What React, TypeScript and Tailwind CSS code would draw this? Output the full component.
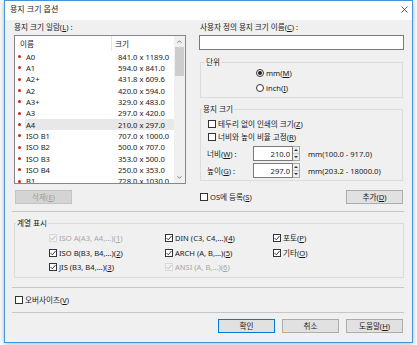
import React from "react";

const SIZES = [
  { name: "A0", size: "841.0 x 1189.0" },
  { name: "A1", size: "594.0 x 841.0" },
  { name: "A2+", size: "431.8 x 609.6" },
  { name: "A2", size: "420.0 x 594.0" },
  { name: "A3+", size: "329.0 x 483.0" },
  { name: "A3", size: "297.0 x 420.0" },
  { name: "A4", size: "210.0 x 297.0", selected: true },
  { name: "ISO B1", size: "707.0 x 1000.0" },
  { name: "ISO B2", size: "500.0 x 707.0" },
  { name: "ISO B3", size: "353.0 x 500.0" },
  { name: "ISO B4", size: "250.0 x 353.0" },
  { name: "B1", size: "728.0 x 1030.0" },
];

function Box({ checked = false, disabled = false }: { checked?: boolean; disabled?: boolean }) {
  return (
    <span
      className={
        disabled
          ? "flex h-[8px] w-[8px] shrink-0 items-center justify-center border border-[#dadada] bg-[#f3f3f3]"
          : "flex h-[8px] w-[8px] shrink-0 items-center justify-center border border-[#333333] bg-white"
      }
    >
      {checked && (
        <svg viewBox="0 0 6 6" className="h-[6px] w-[6px]">
          <path d="M0.5 3 L2.3 4.8 L5.5 1" fill="none" stroke={disabled ? "#b3b3b3" : "#222"} strokeWidth="0.9" />
        </svg>
      )}
    </span>
  );
}

function Radio({ on = false }: { on?: boolean }) {
  return (
    <span className="flex h-[8px] w-[8px] shrink-0 items-center justify-center rounded-full border border-[#333333] bg-white">
      {on && <span className="h-[4px] w-[4px] rounded-full bg-[#222]" />}
    </span>
  );
}

function CheckRow({
  children,
  checked = false,
  disabled = false,
}: {
  children: React.ReactNode;
  checked?: boolean;
  disabled?: boolean;
}) {
  return (
    <div className={disabled ? "flex h-[12px] items-center gap-[2px] text-[#a6a6a6]" : "flex h-[12px] items-center gap-[2px]"}>
      <Box checked={checked} disabled={disabled} />
      <span>{children}</span>
    </div>
  );
}

function Spin({ value }: { value: string }) {
  return (
    <div className="flex h-[15px]">
      <div className="flex w-[40px] items-center justify-end border border-[#7a7a7a] bg-white pr-[2px]">{value}</div>
      <div className="flex w-[7px] flex-col border-y border-r border-[#a8a8a8] bg-[#efefef]">
        <div className="flex flex-1 items-center justify-center border-b border-[#c8c8c8]">
          <svg viewBox="0 0 4 2" className="h-[2px] w-[4px]"><path d="M0 2 L2 0 L4 2 Z" fill="#333" /></svg>
        </div>
        <div className="flex flex-1 items-center justify-center">
          <svg viewBox="0 0 4 2" className="h-[2px] w-[4px]"><path d="M0 0 L2 2 L4 0 Z" fill="#333" /></svg>
        </div>
      </div>
    </div>
  );
}

const btn = "flex h-[14px] w-[57px] items-center justify-center border border-[#adadad] bg-[#e1e1e1]";

export default function App() {
  return (
    <div className="h-[345px] w-[417px] bg-white font-['Noto_Sans','Noto_Sans_CJK_KR',sans-serif] text-[7.6px] leading-[10px] text-[#1a1a1a]">
      <div className="ml-[4px] flex h-[343px] w-[409px] flex-col border border-[#4593d8] bg-[#f0f0f0] shadow-[0_1px_6px_rgba(0,0,0,0.3)]">
        {/* Title bar */}
        <div className="flex h-[19px] items-center justify-between bg-white pb-[3px] pl-[5px] pr-[4px]">
          <span className="text-[8px]">용지 크기 옵션</span>
          <svg viewBox="0 0 7 7" className="h-[7px] w-[7px]">
            <path d="M0.5 0.5 L6.5 6.5 M6.5 0.5 L0.5 6.5" stroke="#333" strokeWidth="0.8" />
          </svg>
        </div>

        <div className="flex flex-1 flex-col pl-[9px] pr-[8px]">
          <div className="flex gap-[13px]">
            {/* Paper size list */}
            <div className="flex w-[172px] flex-col">
              <div className="mt-[1px] h-[12px] leading-[12px]">
                용지 크기 일람(<u>L</u>) :
              </div>
              <div className="mt-[2px] flex h-[149px] border border-[#828790] bg-white">
                <div className="w-[159px] overflow-hidden">
                  <div className="flex h-[15px] items-center">
                    <span className="w-[96px] pl-[5px]">이름</span>
                    <span className="h-full w-px bg-[#e5e5e5]" />
                    <span className="pl-[3px]">크기</span>
                  </div>
                  {SIZES.map((s) => (
                    <div key={s.name} className="flex h-[11.33px] items-center">
                      <span className="ml-[3px] mr-[1px] h-[3px] w-[3px] rounded-full bg-[#d42020]" />
                      <div className={s.selected ? "ml-[3px] flex h-full flex-1 items-center bg-[#e8e8e8]" : "ml-[3px] flex h-full flex-1 items-center"}>
                        <span className="w-[93px] pl-[1px]">{s.name}</span>
                        <span>{s.size}</span>
                      </div>
                    </div>
                  ))}
                </div>
                <div className="flex w-[11px] flex-col bg-[#f0f0f0]">
                  <div className="flex h-[11px] items-center justify-center">
                    <svg viewBox="0 0 6 4" className="h-[3px] w-[5px]"><path d="M0.5 3.5 L3 1 L5.5 3.5" fill="none" stroke="#555" strokeWidth="1" /></svg>
                  </div>
                  <div className="mx-[1px] h-[29px] bg-[#cdcdcd]" />
                  <div className="flex-1" />
                  <div className="flex h-[11px] items-center justify-center">
                    <svg viewBox="0 0 6 4" className="h-[3px] w-[5px]"><path d="M0.5 0.5 L3 3 L5.5 0.5" fill="none" stroke="#555" strokeWidth="1" /></svg>
                  </div>
                </div>
              </div>
            </div>

            {/* Custom size */}
            <div className="flex w-[205px] flex-col">
              <div className="mt-[1px] h-[12px] pl-[1px] leading-[12px]">
                사용자 정의 용지 크기 이름(<u>C</u>) :
              </div>
              <div className="mt-[2px] h-[15px] border border-[#7a7a7a] bg-white" />

              <fieldset className="mx-[1px] mt-[7px] border border-[#dcdcdc] pb-[4px]">
                <legend className="ml-[4px] px-[1px] leading-[10px]">단위</legend>
                <div className="ml-[55px] flex h-[11px] items-center gap-[2px]">
                  <Radio on />
                  <span>mm(<u>M</u>)</span>
                </div>
                <div className="ml-[55px] mt-[4px] flex h-[11px] items-center gap-[2px]">
                  <Radio />
                  <span>inch(<u>I</u>)</span>
                </div>
              </fieldset>

              <fieldset className="mx-[1px] mt-[6px] border border-[#dcdcdc] pb-[2px]">
                <legend className="ml-[1px] px-[1px] leading-[10px]">용지 크기</legend>
                <div className="ml-[7px] mt-[4px]">
                  <CheckRow>테두리 없이 인쇄의 크기(<u>Z</u>)</CheckRow>
                </div>
                <div className="ml-[7px] mt-[1px]">
                  <CheckRow>너비와 높이 비율 고정(<u>R</u>)</CheckRow>
                </div>
                <div className="ml-[6px] mt-[3px] flex items-center">
                  <span className="w-[46px]">너비(<u>W</u>) :</span>
                  <Spin value="210.0" />
                  <span className="ml-[8px]">mm(100.0 - 917.0)</span>
                </div>
                <div className="ml-[6px] mt-[2px] flex items-center">
                  <span className="w-[46px]">높이(<u>G</u>) :</span>
                  <Spin value="297.0" />
                  <span className="ml-[8px]">mm(203.2 - 18000.0)</span>
                </div>
              </fieldset>
            </div>
          </div>

          <div className="mt-[6px] flex h-[14px] gap-[13px]">
            <div className="w-[172px] pl-[1px]">
              <div className="flex h-[14px] w-[57px] items-center justify-center border border-[#c4c4c4] bg-[#d4d4d4] text-[#9d9d9d]">
                삭제(<u>E</u>)
              </div>
            </div>
            <div className="flex w-[205px] items-center justify-between pl-[1px] pr-[1px]">
              <CheckRow>OS에 등록(<u>S</u>)</CheckRow>
              <div className={btn}>추가(<u>D</u>)</div>
            </div>
          </div>

          <div className="-ml-[2px] mt-[7px] h-px bg-[#c6c6c6]" />

          <fieldset className="mt-[6px] border border-[#dcdcdc] pb-[4px]">
            <legend className="ml-[1px] px-[1px] leading-[10px]">계열 표시</legend>
            <div className="ml-[34px] mt-[4px] grid grid-cols-[116px_108px_1fr] gap-y-[2.5px]">
              <CheckRow checked disabled>ISO A(A3, A4,...)(<u>1</u>)</CheckRow>
              <CheckRow checked>DIN (C3, C4,...)(<u>4</u>)</CheckRow>
              <CheckRow checked>포토(<u>P</u>)</CheckRow>
              <CheckRow checked>ISO B(B3, B4,...)(<u>2</u>)</CheckRow>
              <CheckRow checked>ARCH (A, B,...)(<u>5</u>)</CheckRow>
              <CheckRow checked>기타(<u>O</u>)</CheckRow>
              <CheckRow checked>JIS (B3, B4,...)(<u>3</u>)</CheckRow>
              <CheckRow checked disabled>ANSI (A, B,...)(<u>6</u>)</CheckRow>
            </div>
          </fieldset>

          <div className="-ml-[2px] mt-[9px] h-px bg-[#c6c6c6]" />

          <div className="ml-[1px] mt-[6px]">
            <CheckRow>오버사이즈(<u>V</u>)</CheckRow>
          </div>

          <div className="-ml-[2px] mt-[6px] h-px bg-[#c6c6c6]" />

          <div className="mt-[6px] flex justify-end gap-[7px] pr-[1px]">
            <div className="flex h-[14px] w-[57px] items-center justify-center border border-[#0078d7] bg-[#e1e1e1]">확인</div>
            <div className={btn}>취소</div>
            <div className={btn}>도움말(<u>H</u>)</div>
          </div>
        </div>
      </div>
    </div>
  );
}
